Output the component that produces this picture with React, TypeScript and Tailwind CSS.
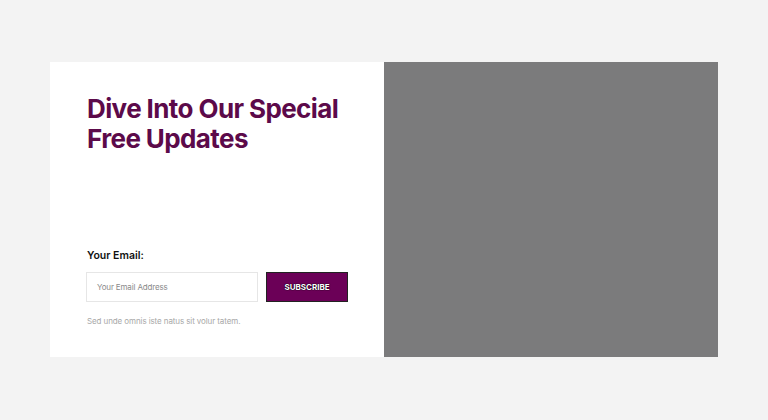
import React from "react";

export default function App() {
  return (
    <div className="w-[768px] h-[420px] bg-[#f3f3f3] pt-[62px] pl-[50px]" style={{ fontFamily: "Inter, 'Noto Sans', sans-serif" }}>
      <div className="flex w-[668px] h-[295px]">
        <div className="w-[334px] h-full bg-white pl-[37px] pt-[32px] flex flex-col">
          <h1 className="text-[26px] leading-[30px] font-bold text-[#5c0a4a] tracking-[-0.6px]">
            Dive Into Our Special
            <br />
            Free Updates
          </h1>
          <div className="mt-[95px] text-[10.5px] font-semibold text-[#111] leading-[14px]">Your Email:</div>
          <div className="flex mt-[9px] gap-[8px] -ml-px">
            <div className="w-[172px] h-[30px] border border-[#e6e6e6] flex items-center pl-[10px] text-[8px] tracking-[-0.15px] text-[#8a8a8a]">
              Your Email Address
            </div>
            <div className="w-[82px] h-[30px] bg-[#6b0057] border border-[#222] flex items-center justify-center text-[8px] font-bold text-white" style={{ textShadow: "0 0 1px #000, 0 0 1px #000" }}>
              SUBSCRIBE
            </div>
          </div>
          <div className="mt-[13px] text-[8px] tracking-[-0.1px] text-[#a8a8a8]">Sed unde omnis iste natus sit volur tatem.</div>
        </div>
        <div className="w-[334px] h-full bg-[#7b7b7c]" />
      </div>
    </div>
  );
}
